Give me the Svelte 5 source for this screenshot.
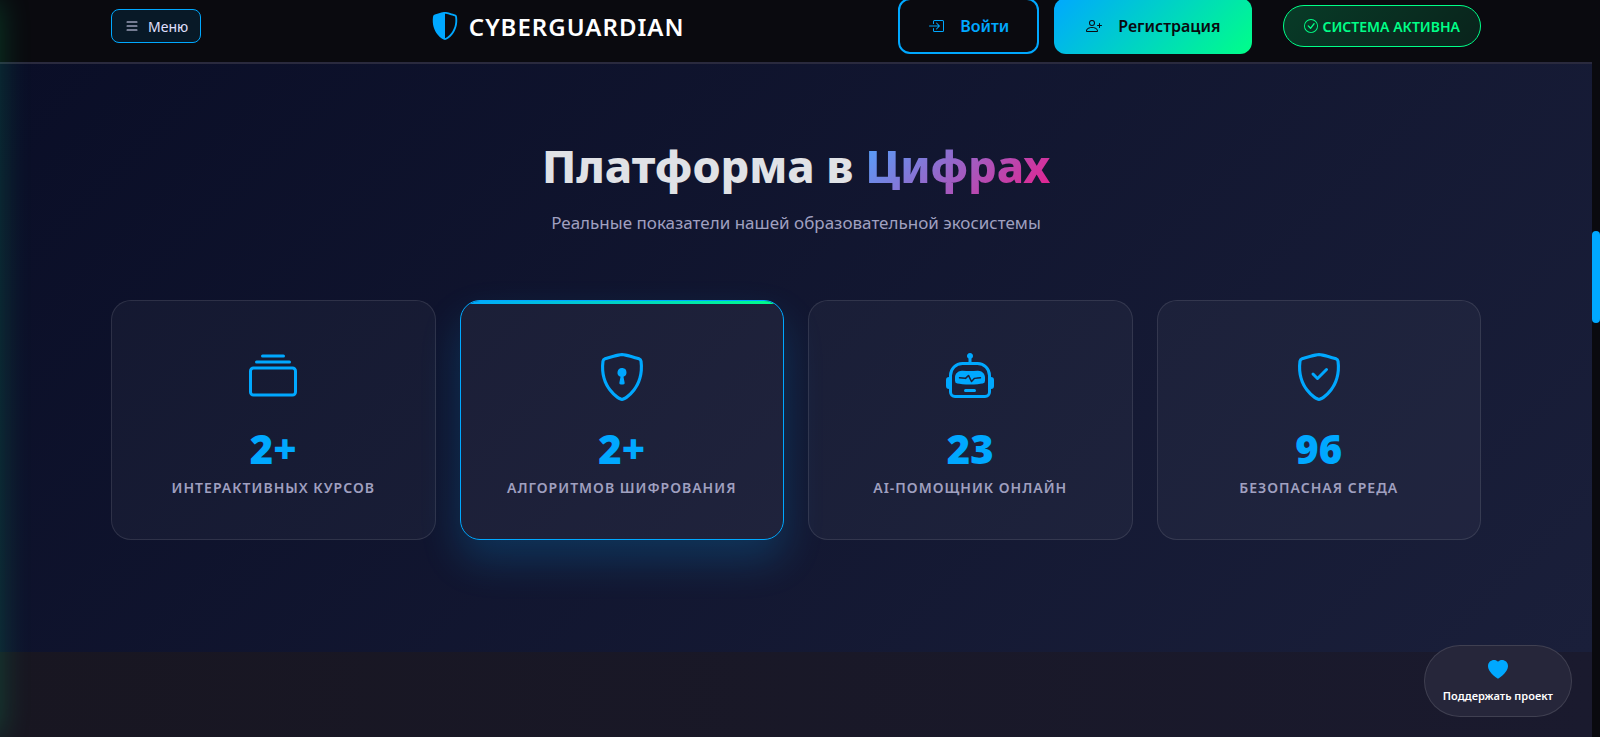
<script>
  const shieldOuter =
    'M5.072.56C6.157.265 7.31 0 8 0s1.843.265 2.928.56c1.11.3 2.229.655 2.887.87a1.54 1.54 0 0 1 1.044 1.262c.596 4.477-.787 7.795-2.465 9.99a11.8 11.8 0 0 1-2.517 2.453 7 7 0 0 1-1.048.625c-.28.132-.581.24-.829.24s-.548-.108-.829-.24a7 7 0 0 1-1.048-.625 11.8 11.8 0 0 1-2.517-2.453C1.928 10.487.545 7.169 1.141 2.692A1.54 1.54 0 0 1 2.185 1.43 63 63 0 0 1 5.072.56';
  const shieldFrame =
    'M5.338 1.59a61 61 0 0 0-2.837.856.48.48 0 0 0-.328.39c-.554 4.157.726 7.19 2.253 9.188a10.7 10.7 0 0 0 2.287 2.233c.346.244.652.42.893.533q.18.085.293.118a1 1 0 0 0 .101.025 1 1 0 0 0 .1-.025q.114-.034.294-.118c.24-.113.547-.29.893-.533a10.7 10.7 0 0 0 2.287-2.233c1.527-1.997 2.807-5.031 2.253-9.188a.48.48 0 0 0-.328-.39c-.651-.213-1.75-.56-2.837-.855C9.552 1.29 8.531 1.067 8 1.067c-.53 0-1.552.223-2.662.524z' +
    shieldOuter;

  const icons = {
    list: [
      'M2.5 12a.5.5 0 0 1 .5-.5h10a.5.5 0 0 1 0 1H3a.5.5 0 0 1-.5-.5m0-4a.5.5 0 0 1 .5-.5h10a.5.5 0 0 1 0 1H3a.5.5 0 0 1-.5-.5m0-4a.5.5 0 0 1 .5-.5h10a.5.5 0 0 1 0 1H3a.5.5 0 0 1-.5-.5'
    ],
    shieldHalf: [
      'M8 14.933a1 1 0 0 0 .1-.025q.114-.034.294-.118c.24-.113.547-.29.893-.533a10.7 10.7 0 0 0 2.287-2.233c1.527-1.997 2.807-5.031 2.253-9.188a.48.48 0 0 0-.328-.39c-.651-.213-1.75-.56-2.837-.855C9.552 1.29 8.531 1.067 8 1.067z' +
        shieldOuter
    ],
    login: [
      'M6 3.5a.5.5 0 0 1 .5-.5h8a.5.5 0 0 1 .5.5v9a.5.5 0 0 1-.5.5h-8a.5.5 0 0 1-.5-.5v-2a.5.5 0 0 0-1 0v2A1.5 1.5 0 0 0 6.5 14h8a1.5 1.5 0 0 0 1.5-1.5v-9A1.5 1.5 0 0 0 14.5 2h-8A1.5 1.5 0 0 0 5 3.5v2a.5.5 0 0 0 1 0z',
      'M11.854 8.354a.5.5 0 0 0 0-.708l-3-3a.5.5 0 1 0-.708.708L10.293 7.5H1.5a.5.5 0 0 0 0 1h8.793l-2.147 2.146a.5.5 0 0 0 .708.708z'
    ],
    personPlus: [
      'M6 8a3 3 0 1 0 0-6 3 3 0 0 0 0 6m2-3a2 2 0 1 1-4 0 2 2 0 0 1 4 0m4 8c0 1-1 1-1 1H1s-1 0-1-1 1-4 6-4 6 3 6 4m-1-.004c-.001-.246-.154-.986-.832-1.664C9.516 10.68 8.289 10 6 10s-3.516.68-4.168 1.332c-.678.678-.83 1.418-.832 1.664z',
      'M13.5 5a.5.5 0 0 1 .5.5V7h1.5a.5.5 0 0 1 0 1H14v1.5a.5.5 0 0 1-1 0V8h-1.5a.5.5 0 0 1 0-1H13V5.5a.5.5 0 0 1 .5-.5'
    ],
    checkCircle: [
      'M8 15A7 7 0 1 1 8 1a7 7 0 0 1 0 14m0 1A8 8 0 1 0 8 0a8 8 0 0 0 0 16',
      'm10.97 4.97-.02.022-3.473 4.425-2.093-2.094a.75.75 0 0 0-1.06 1.06L6.97 11.03a.75.75 0 0 0 1.079-.02l3.992-4.99a.75.75 0 0 0-1.071-1.05'
    ],
    collection: [
      'M2.5 3.5a.5.5 0 0 1 0-1h11a.5.5 0 0 1 0 1zm2-2a.5.5 0 0 1 0-1h7a.5.5 0 0 1 0 1zM0 13a1.5 1.5 0 0 0 1.5 1.5h13A1.5 1.5 0 0 0 16 13V6a1.5 1.5 0 0 0-1.5-1.5h-13A1.5 1.5 0 0 0 0 6zm1.5.5A.5.5 0 0 1 1 13V6a.5.5 0 0 1 .5-.5h13a.5.5 0 0 1 .5.5v7a.5.5 0 0 1-.5.5z'
    ],
    shieldLock: [
      shieldFrame,
      'M9.5 6.5a1.5 1.5 0 0 1-1 1.415l.385 1.99a.5.5 0 0 1-.491.595h-.788a.5.5 0 0 1-.49-.595l.384-1.99a1.5 1.5 0 1 1 2-1.415'
    ],
    robot: [
      'M6 12.5a.5.5 0 0 1 .5-.5h3a.5.5 0 0 1 0 1h-3a.5.5 0 0 1-.5-.5M3 8.062C3 6.76 4.235 5.765 5.53 5.886a26.6 26.6 0 0 0 4.94 0C11.765 5.765 13 6.76 13 8.062v1.157a.93.93 0 0 1-.765.935c-.845.147-2.34.346-4.235.346s-3.39-.2-4.235-.346A.93.93 0 0 1 3 9.219zm4.542-.827a.25.25 0 0 0-.217.068l-.92.9a25 25 0 0 1-1.871-.183.25.25 0 0 0-.068.495c.55.076 1.232.149 2.02.193a.25.25 0 0 0 .189-.071l.754-.736.847 1.71a.25.25 0 0 0 .404.062l.932-.97a25 25 0 0 0 1.922-.188.25.25 0 0 0-.068-.495c-.538.074-1.207.145-1.98.189a.25.25 0 0 0-.166.076l-.754.785-.842-1.7a.25.25 0 0 0-.182-.135',
      'M8.5 1.866a1 1 0 1 0-1 0V3h-2A4.5 4.5 0 0 0 1 7.5V8a1 1 0 0 0-1 1v2a1 1 0 0 0 1 1v1a2 2 0 0 0 2 2h10a2 2 0 0 0 2-2v-1a1 1 0 0 0 1-1V9a1 1 0 0 0-1-1v-.5A4.5 4.5 0 0 0 10.5 3h-2zM14 7.5V13a1 1 0 0 1-1 1H3a1 1 0 0 1-1-1V7.5A3.5 3.5 0 0 1 5.5 4h5A3.5 3.5 0 0 1 14 7.5'
    ],
    shieldCheck: [
      shieldFrame,
      'M10.854 5.146a.5.5 0 0 1 0 .708l-3 3a.5.5 0 0 1-.708 0l-1.5-1.5a.5.5 0 1 1 .708-.708L7.5 7.793l2.646-2.647a.5.5 0 0 1 .708 0'
    ],
    heart: ['M8 1.314C12.438-3.248 23.534 4.735 8 15-7.534 4.736 3.562-3.248 8 1.314']
  };

  const stats = [
    { icon: 'collection', value: '2+', label: 'Интерактивных курсов' },
    { icon: 'shieldLock', value: '2+', label: 'Алгоритмов шифрования', active: true },
    { icon: 'robot', value: '23', label: 'AI-помощник онлайн' },
    { icon: 'shieldCheck', value: '96', label: 'Безопасная среда' }
  ];
</script>

{#snippet icon(name, size)}
  <svg width={size} height={size} viewBox="0 0 16 16" fill="currentColor" fill-rule="evenodd" aria-hidden="true">
    {#each icons[name] as d}
      <path {d} />
    {/each}
  </svg>
{/snippet}

<div class="shell">
  <div class="page">
    <header>
      <div class="container bar">
        <button class="menu" type="button">{@render icon('list', 16)} Меню</button>
        <a class="brand" href="#top">{@render icon('shieldHalf', 28)} CYBERGUARDIAN</a>
        <div class="actions">
          <a class="btn outline" href="#login">{@render icon('login', 16)} Войти</a>
          <a class="btn solid" href="#register">{@render icon('personPlus', 16)} Регистрация</a>
          <span class="status">{@render icon('checkCircle', 14)} СИСТЕМА АКТИВНА</span>
        </div>
      </div>
    </header>

    <section class="numbers">
      <div class="container">
        <h2>Платформа в <span>Цифрах</span></h2>
        <p class="lead">Реальные показатели нашей образовательной экосистемы</p>
        <div class="grid">
          {#each stats as s}
            <article class="card" class:active={s.active}>
              {@render icon(s.icon, 48)}
              <strong>{s.value}</strong>
              <span class="label">{s.label}</span>
            </article>
          {/each}
        </div>
      </div>
    </section>

    <section class="next"></section>

    <button class="support" type="button">
      {@render icon('heart', 20)}
      Поддержать проект
    </button>
  </div>
  <div class="track"><div class="thumb"></div></div>
</div>

<style>
  :global(body) {
    background: #0a0a0f;
  }
  * {
    box-sizing: border-box;
  }
  .shell {
    display: flex;
    min-height: 100vh;
    font-family: 'Noto Sans', sans-serif;
    color: #fff;
  }
  .page {
    position: relative;
    flex: 1;
    min-width: 0;
    display: flex;
    flex-direction: column;
    overflow: hidden;
  }
  /* Glow of the closed side menu */
  .page::before {
    content: '';
    position: absolute;
    top: 0;
    bottom: 0;
    left: -300px;
    width: 300px;
    box-shadow: 0 0 30px rgba(0, 255, 136, 0.2);
    z-index: 2;
    pointer-events: none;
  }
  .track {
    width: 8px;
    background: #0a0a0f;
    display: flex;
    flex-direction: column;
  }
  .track::before {
    content: '';
    flex: 231;
  }
  .thumb {
    flex: 92;
    border-radius: 4px;
    background: #00a8ff;
  }
  .track::after {
    content: '';
    flex: 414;
  }
  .container {
    width: calc(100% - 48px);
    max-width: 1370px;
    margin: 0 auto;
  }
  svg {
    display: block;
    flex: none;
  }
  button,
  a {
    font-family: inherit;
    cursor: pointer;
    text-decoration: none;
  }
  header {
    background: #0a0a0f;
    border-bottom: 2px solid #2a2a3e;
    padding-bottom: 10px;
  }
  .bar {
    display: flex;
    align-items: center;
    justify-content: space-between;
    height: 52px;
  }
  .menu {
    display: flex;
    align-items: center;
    gap: 8px;
    height: 34px;
    padding: 0 12px;
    border: 1px solid #00a8ff;
    border-radius: 8px;
    background: rgba(0, 168, 255, 0.1);
    color: #e0e0ff;
    font-size: 14px;
  }
  .brand {
    display: flex;
    align-items: center;
    gap: 10px;
    margin-left: 16px;
    color: #fff;
    font-size: 24px;
    font-weight: 600;
    letter-spacing: 1px;
  }
  .brand svg {
    color: #00a8ff;
  }
  .actions {
    display: flex;
    align-items: center;
    gap: 15px;
  }
  .btn {
    display: flex;
    align-items: center;
    gap: 16px;
    height: 56px;
    border-radius: 12px;
    font-size: 16px;
    font-weight: 600;
  }
  .outline {
    padding: 0 28px;
    border: 2px solid #00a8ff;
    color: #00a8ff;
  }
  .solid {
    padding: 0 32px;
    background: linear-gradient(135deg, #00a8ff, #00ff88);
    color: #0a0a0f;
  }
  .status {
    display: flex;
    align-items: center;
    gap: 4px;
    height: 42px;
    margin-left: 16px;
    padding: 0 20px;
    border: 1px solid #00ff88;
    border-radius: 21px;
    background: linear-gradient(135deg, rgba(0, 255, 136, 0.2), rgba(0, 255, 136, 0.1));
    color: #00ff88;
    font-size: 14px;
    font-weight: 600;
  }
  .numbers {
    padding: 70px 0 112px;
    background: linear-gradient(135deg, #0a0e27, #1a1f3a);
    text-align: center;
  }
  h2 {
    margin: 0;
    font-size: 45px;
    line-height: 64px;
    font-weight: 800;
    color: #e0e2e6;
  }
  h2 span {
    background: linear-gradient(135deg, #4da6ff, #e91e8c);
    -webkit-background-clip: text;
    background-clip: text;
    color: transparent;
  }
  .lead {
    margin: 11px 0 63px;
    font-size: 17px;
    line-height: 28px;
    color: #a0a0c0;
  }
  .grid {
    display: grid;
    grid-template-columns: repeat(4, 1fr);
    gap: 24px;
  }
  .card {
    position: relative;
    display: flex;
    flex-direction: column;
    align-items: center;
    min-height: 240px;
    padding: 52px 20px 40px;
    border: 1px solid rgba(255, 255, 255, 0.1);
    border-radius: 20px;
    background: rgba(255, 255, 255, 0.035);
    overflow: hidden;
    color: #00a8ff;
  }
  .card.active {
    border-color: #00a8ff;
    background: rgba(255, 255, 255, 0.05);
    box-shadow: 0 20px 40px rgba(0, 168, 255, 0.2);
  }
  .active::before {
    content: '';
    position: absolute;
    inset: 0 0 auto;
    height: 3px;
    background: linear-gradient(90deg, #00a8ff, #00ff88);
  }
  strong {
    margin-top: 28px;
    font-size: 40px;
    line-height: 40px;
    font-weight: 900;
  }
  .label {
    margin-top: 8px;
    font-size: 14px;
    line-height: 22px;
    font-weight: 600;
    letter-spacing: 1px;
    text-transform: uppercase;
    color: #a0a0c0;
  }
  .next {
    flex: 1;
    background: linear-gradient(90deg, #181621, #1a1a2e);
  }
  .support {
    position: absolute;
    right: 20px;
    bottom: 20px;
    display: flex;
    flex-direction: column;
    align-items: center;
    gap: 8px;
    height: 72px;
    padding: 14px 18px 12px;
    border: 1px solid rgba(255, 255, 255, 0.12);
    border-radius: 36px;
    background: #26263a;
    color: #fff;
    font-size: 11px;
    line-height: 15px;
    font-weight: 600;
  }
  .support svg {
    color: #00a8ff;
  }
</style>
